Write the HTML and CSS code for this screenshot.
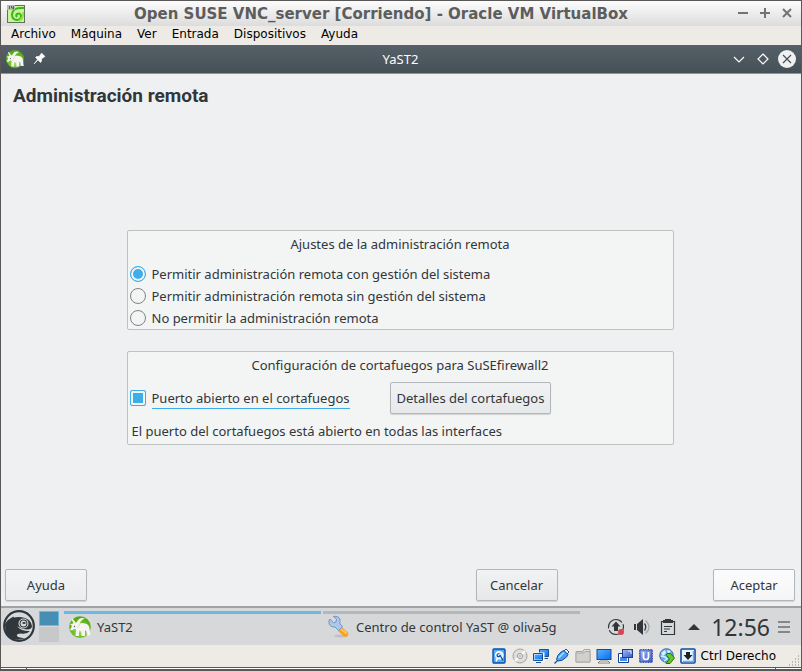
FILE: index.html
```html
<!DOCTYPE html>
<html lang="es">
<head>
<meta charset="utf-8">
<meta name="viewport" content="width=device-width, initial-scale=1">
<title>Open SUSE VNC_server [Corriendo] - Oracle VM VirtualBox</title>
<link rel="stylesheet" href="styles.css">
</head>
<body>
<svg class="defs" width="0" height="0" aria-hidden="true">
  <defs>
    <radialGradient id="leaf" cx="50%" cy="65%" r="60%"><stop offset="0" stop-color="#a3e04e"/><stop offset="1" stop-color="#4fa90e"/></radialGradient>
    <linearGradient id="screen" x1="0" y1="0" x2="1" y2="1"><stop offset="0" stop-color="#58b4ff"/><stop offset="1" stop-color="#0a6bea"/></linearGradient>
    <linearGradient id="chip" x1="0" y1="0" x2="1" y2="1"><stop offset="0" stop-color="#a3bcf5"/><stop offset="1" stop-color="#3758c8"/></linearGradient>
  </defs>
  <symbol id="yast" viewBox="0 0 24 24">
    <circle cx="12" cy="12" r="10.5" fill="url(#leaf)" stroke="#62b51d" stroke-width=".6"/>
    <path d="M2 9 L5.500 8.500 L3.500 4 L4.500 3.500 L8 8 L11 4 Q13 2.500 17 3.500 Q13.500 4.500 11.500 8.500 Q14 7.500 17 8.500 Q21 9 21.500 13.500 L22.500 20.500 H19 L18.500 16.500 L17 15.500 L17 21 H13.500 L13 16.500 L11 16 L11 21 H7.500 L8 14 Q5.500 13.500 4 15.500 L2 15 L4 11 Z" fill="#f6f6f1"/>
    <path d="M11 16 L13 16.500 L13.500 20.500 M17 15 L18.500 16.500 L19 20 M9 13 Q11 12 11.500 9" fill="none" stroke="#c7d3bd" stroke-width=".8"/>
    <circle cx="6.500" cy="11.500" r=".7" fill="#555"/>
  </symbol>
</svg>
<div class="vm">
  <header class="host-title">
    <svg class="vm-logo" viewBox="0 0 18 18" width="18" height="18" aria-hidden="true">
      <rect x=".5" y=".5" width="17" height="17" fill="#c8f49a" stroke="#637158"/>
      <path d="M17 3 Q5 2 5 10 Q5.500 15 10 15 Q14.500 14.500 14 10.500 Q13 7.500 10 9 Q8.500 10.500 10 12" fill="none" stroke="#3bb71a" stroke-width="2"/>
      <path d="M12 16 Q17 13 16 7" stroke="#8ee34b" fill="none" stroke-width="2"/>
      <rect x="0" y="0" width="8" height="5" fill="#b9b9b0"/>
      <path d="M2.500 1V4M4.500 1V3H6.500M6.500 1V4.500" stroke="#4c4c4c" fill="none" stroke-width=".8"/>
    </svg>
    <h1>Open SUSE VNC_server [Corriendo] - Oracle VM VirtualBox</h1>
    <div class="host-controls">
      <button type="button" aria-label="Minimizar"><svg viewBox="0 0 12 12" width="12" height="12"><path d="M1 5H11"/></svg></button>
      <button type="button" aria-label="Maximizar"><svg viewBox="0 0 12 12" width="12" height="12"><path d="M1 5H11M6 0V10"/></svg></button>
      <button type="button" aria-label="Cerrar"><svg viewBox="0 0 12 12" width="12" height="12"><path d="M2 1L10 9M10 1L2 9"/></svg></button>
    </div>
  </header>
  <nav class="host-menu">
    <button type="button">Archivo</button>
    <button type="button">Máquina</button>
    <button type="button">Ver</button>
    <button type="button">Entrada</button>
    <button type="button">Dispositivos</button>
    <button type="button">Ayuda</button>
  </nav>

  <div class="guest-title">
    <div class="guest-left">
      <svg width="20" height="20" aria-hidden="true"><use href="#yast"/></svg>
      <svg viewBox="0 0 14 14" width="14" height="14" aria-hidden="true"><path d="M8.500 1 L12 4.500 L11 5 L8.500 7 L8.500 9.500 L7.500 10.500 L5 8 L1 12 L4.500 7.500 L2.500 5.500 L3.500 4.500 L6 4.500 L8 2 Z" fill="#fcfcfc" stroke="#fcfcfc" stroke-width=".6"/></svg>
    </div>
    <span>YaST2</span>
    <div class="guest-controls">
      <button type="button" aria-label="Minimizar ventana"><svg viewBox="0 0 18 18" width="18" height="18"><path d="M4 7L9 12L14 7" fill="none" stroke="#fcfcfc" stroke-width="1.200"/></svg></button>
      <button type="button" aria-label="Maximizar ventana"><svg viewBox="0 0 18 18" width="18" height="18"><path d="M9 4L14 9L9 14L4 9Z" fill="none" stroke="#fcfcfc" stroke-width="1.200"/></svg></button>
      <button type="button" aria-label="Cerrar ventana"><svg viewBox="0 0 18 18" width="18" height="18"><circle cx="9" cy="9" r="9" fill="#eff0f1"/><path d="M5 5L13 13M13 5L5 13" stroke="#475057" stroke-width="1.200"/></svg></button>
    </div>
  </div>

  <main class="dialog">
    <h2 class="heading">Administración remota</h2>
    <div class="groups">
      <section class="group" role="radiogroup" aria-labelledby="remote-title">
        <h3 id="remote-title">Ajustes de la administración remota</h3>
        <div class="options">
          <label class="option"><input type="radio" name="remote" checked><span>Permitir administración remota con gestión del sistema</span></label>
          <label class="option"><input type="radio" name="remote"><span>Permitir administración remota sin gestión del sistema</span></label>
          <label class="option"><input type="radio" name="remote"><span>No permitir la administración remota</span></label>
        </div>
      </section>
      <section class="group" aria-labelledby="fw-title">
        <h3 id="fw-title">Configuración de cortafuegos para SuSEfirewall2</h3>
        <div class="firewall">
          <label class="option"><input type="checkbox" checked><span class="focused">Puerto abierto en el cortafuegos</span></label>
          <button type="button" class="btn details">Detalles del cortafuegos</button>
        </div>
        <p class="status-text">El puerto del cortafuegos está abierto en todas las interfaces</p>
      </section>
    </div>
    <div class="actions">
      <button type="button" class="btn help">Ayuda</button>
      <button type="button" class="btn cancel">Cancelar</button>
      <button type="button" class="btn accept">Aceptar</button>
    </div>
  </main>

  <footer class="panel">
    <button type="button" class="launcher" aria-label="Menú de aplicaciones">
      <svg viewBox="0 0 32 32" width="32" height="32">
        <circle cx="16" cy="16" r="14.800" fill="#d6d8da" stroke="#30373c" stroke-width="2.200"/>
        <path d="M2 15 Q3 10 9 7.500 L10 6.500 L11 7.500 Q17 6.500 22 8 Q28 10 29 16 Q29 19 25 19.500 Q20 19.500 14 16.500 Q19 21.500 27 21 Q24 24.500 18 23.500 Q13 23.500 14 26 Q16 28 22 28 Q16 31 10 29 Q2 25 2 15Z" fill="#30373c"/>
        <circle cx="20.500" cy="13.500" r="5" fill="#d6d8da"/><circle cx="20.500" cy="13.500" r="3.900" fill="#30373c"/><circle cx="20.500" cy="13.500" r="2.900" fill="#d6d8da"/><ellipse cx="21" cy="13" rx="1.700" ry="1" fill="#30373c"/>
      </svg>
    </button>
    <div class="pager"><span class="desk current"></span><span class="desk"></span></div>
    <div class="tasks">
      <button type="button" class="task active"><svg width="24" height="24" aria-hidden="true"><use href="#yast"/></svg><span>YaST2</span></button>
      <button type="button" class="task">
        <svg viewBox="0 0 24 24" width="24" height="24" aria-hidden="true">
          <ellipse cx="14" cy="21" rx="7" ry="1.500" fill="#bfc0c2"/>
          <path d="M14 15L18.500 19" stroke="#f7a321" stroke-width="5.500" stroke-linecap="round"/>
          <path d="M14 14L19 18" stroke="#ffc653" stroke-width="2" stroke-linecap="round"/>
          <path d="M2 8 Q1.500 5 3 4 L6.500 8 L9 7 L9.500 4 L6.500 1.500 Q11.500 .5 13 4.500 Q13.500 7 12.500 8 L15.500 12 L11.500 15.500 L8 12 Q3 12.500 2 8Z" fill="#aec8ea" stroke="#658fc8" stroke-width=".9"/>
        </svg><span>Centro de control YaST @ oliva5g</span></button>
    </div>
    <div class="tray">
      <svg viewBox="0 0 18 18" width="18" height="18" aria-hidden="true"><circle cx="9" cy="9" r="7.500" fill="none" stroke="#31363b" stroke-width="1.200" stroke-dasharray="20 2"/><path d="M9 3.500L13.500 8.500H11V13H7V8.500H4.500Z" fill="#31363b"/><circle cx="14" cy="14" r="3" fill="#da4453"/></svg>
      <svg viewBox="0 0 18 18" width="18" height="18" aria-hidden="true"><path d="M1 6H3V12H1ZM4 6L10 1V17L4 12Z" fill="#31363b"/><path d="M11.500 5.500Q14 9 11.500 12.500" fill="none" stroke="#31363b" stroke-width="1.300"/><path d="M12.500 2.500Q19.500 9 12.500 15.500" fill="none" stroke="#a5a7a9" stroke-width="1.300"/></svg>
      <svg viewBox="0 0 18 18" width="18" height="18" aria-hidden="true"><path d="M2.500 3.500H15.500V16.500H2.500Z" fill="none" stroke="#31363b" stroke-width="1.200"/><path d="M4 2H6V1H12V2H14V5H4Z" fill="#31363b"/><path d="M5 8.500H13M5 11H11M5 13.500H8" stroke="#31363b"/></svg>
      <svg viewBox="0 0 18 18" width="18" height="18" aria-hidden="true"><path d="M3 12L9 6L15 12Z" fill="#31363b"/></svg>
      <time>12:56</time>
      <svg viewBox="0 0 12 12" width="12" height="12" aria-hidden="true"><path d="M0 1H12M0 6H12M0 11H12" stroke="#85888b" stroke-width="2"/></svg>
    </div>
  </footer>

  <div class="statusbar">
    <svg viewBox="0 0 16 16" width="16" height="16" aria-hidden="true"><rect x="2" y="1" width="12" height="14" rx="1" fill="#55adfa" stroke="#0650a8" stroke-width="1.400"/><path d="M4.500 8.500Q4 4 8 3.500Q12.500 4 12 8Q10.500 12 7 10.500L5 13.500" fill="#ddecfb" stroke="#fff" stroke-width="1.200"/><path d="M8.500 5.500Q5 6 6.500 8.500Q9 9 9 7L12 12.500" fill="none" stroke="#0650a8" stroke-width="1.200"/></svg>
    <svg viewBox="0 0 16 16" width="16" height="16" aria-hidden="true"><circle cx="8" cy="8" r="7" fill="#dededc" stroke="#a3a3a0"/><path d="M8 8L13 3M8 8L3 13" stroke="#fff" stroke-width="2"/><circle cx="8" cy="8" r="2.500" fill="#eee" stroke="#999"/><circle cx="8" cy="8" r=".8" fill="#999"/></svg>
    <svg viewBox="0 0 16 16" width="16" height="16" aria-hidden="true"><path d="M6.500 1.500H15.500V8.500H6.500Z" fill="url(#screen)" stroke="#164c98"/><path d="M11 10.500H15" stroke="#164c98"/><rect x=".5" y="5.500" width="10" height="7" fill="url(#screen)" stroke="#fff" stroke-width="2"/><path d="M.5 5.500H9.500V12.500H.5ZM3 14.500H8" fill="none" stroke="#164c98"/></svg>
    <svg viewBox="0 0 16 16" width="16" height="16" aria-hidden="true"><path d="M10 3L12 1L15 4L13 6Z" fill="#f4f7fc" stroke="#1b529a"/><path d="M10 2.500L14 6.500L12.500 9Q8 13.500 4 13L2.500 11.500Q3 7 7 4Z" fill="#4c9ff4" stroke="#0d4f9f"/><path d="M4.500 10L10 4.500" stroke="#b7dcff" stroke-width="1.500"/><path d="M3.500 12.500L.5 15.500" stroke="#0d4f9f" stroke-width="1.300"/></svg>
    <svg viewBox="0 0 16 16" width="16" height="16" aria-hidden="true"><path d="M1 3.500H8L9 1.500H15V14H1Z" fill="#e0e0df" stroke="#a4a4a1"/><path d="M1 5H9L10 3.500H15V14H1Z" fill="#d0d0ce" stroke="#aaa"/></svg>
    <svg viewBox="0 0 16 16" width="16" height="16" aria-hidden="true"><rect x="1" y="1.500" width="14" height="10" fill="url(#screen)" stroke="#164c98"/><path d="M4 13H12L14 15H2Z" fill="#fff" stroke="#666" stroke-width=".8"/></svg>
    <svg viewBox="0 0 16 16" width="16" height="16" aria-hidden="true"><path d="M1.500 5.500H11.500V14.500H1.500Z" fill="#fff" stroke="#183f91"/><path d="M3 9H10V13H3Z" fill="#458bed"/><rect x="5.500" y="1.500" width="10" height="8" fill="url(#chip)" stroke="#183f91"/><path d="M11 3H14V6" stroke="#e7efff" fill="none"/></svg>
    <svg viewBox="0 0 16 16" width="16" height="16" aria-hidden="true"><path d="M1 3H15M1 5.500H15M1 8H15M1 10.500H15M1 13H15M3 1V15M5.500 1V15M8 1V15M10.500 1V15M13 1V15" stroke="#293a8c"/><rect x="2" y="2" width="12" height="12" fill="url(#chip)" stroke="#3e55b9"/><path d="M5.500 4V9Q5.500 11.500 8 11.500Q10.500 11.500 10.500 9V4" fill="none" stroke="#fff" stroke-width="1.700"/></svg>
    <svg viewBox="0 0 16 16" width="16" height="16" aria-hidden="true"><circle cx="7.500" cy="7.500" r="6.800" fill="#67a9ee" stroke="#426d9b"/><path d="M2 5L6 2L7 5L4 8ZM8 2L12 3L9 6Z" fill="#d8f0ff"/><path d="M8 5.500H11.500L15.500 10L11 15.500H7L10.500 11L7.500 7.500Z" fill="#65c82a" stroke="#247409"/><path d="M2 8L6 9L8 11L5 13" fill="none" stroke="#d8f0ff" stroke-width="1.500"/></svg>
    <svg viewBox="0 0 16 16" width="16" height="16" aria-hidden="true"><rect x="1" y="1" width="14" height="14" rx="1" fill="#e8f3ff" stroke="#0a4e9f" stroke-width="1.600"/><path d="M3 13.500H13.500V3" fill="none" stroke="#68aef5" stroke-width="1.500"/><path d="M6 4H10V7H12.500L8 12L3.500 7H6Z" fill="#1b2228"/></svg>
    <span>Ctrl Derecho</span>
    <svg class="grip" viewBox="0 0 12 12" width="12" height="12" aria-hidden="true"><path d="M10 1h1M7 4h1M10 4h1M4 7h1M7 7h1M10 7h1M1 10h1M4 10h1M7 10h1M10 10h1" stroke="#aaa7a2" stroke-width="1.500"/></svg>
  </div>
  <div class="frame-bottom"></div>
</div>
</body>
</html>
```
FILE: styles.css
```css
* { box-sizing: border-box; }

body {
  margin: 0;
  font: 13px/18px "Noto Sans", sans-serif;
  color: #31363b;
}

button {
  margin: 0;
  padding: 0;
  border: 0;
  background: none;
  color: inherit;
  font: inherit;
}

svg { display: block; flex: none; }
.defs { position: absolute; }
h1, h2, h3, p { margin: 0; }

.vm {
  display: flex;
  flex-direction: column;
  min-height: 100vh;
  border: solid #5a5757;
  border-width: 1px 1px 0;
  background: #eff0f1;
}

/* Host window */
.host-title {
  display: grid;
  grid-template-columns: 18px 1fr 56px;
  align-items: center;
  height: 25px;
  padding: 0 8px 0 6px;
  background: linear-gradient(#fcfcfc, #dcdcdc);
}

.host-title h1 {
  color: #5d5d5d;
  font: bold 15px/24px "DejaVu Sans", sans-serif;
  text-align: center;
  white-space: nowrap;
}

.host-controls {
  display: flex;
  justify-content: flex-end;
  gap: 10px;
}

.host-controls path { stroke: #737373; stroke-width: 2; }

.host-menu {
  display: flex;
  align-items: flex-start;
  gap: 15px;
  height: 19px;
  padding-left: 10px;
  background: #eeebe7;
  color: #000;
  font: 12px/16px "DejaVu Sans", sans-serif;
}

/* Guest window */
.guest-title {
  display: grid;
  grid-template-columns: 1fr auto 1fr;
  align-items: center;
  height: 29px;
  padding: 0 5px 0 4px;
  border-bottom: 1px solid #3daee9;
  background: linear-gradient(#566068, #465057);
  color: #fcfcfc;
}

.guest-left { display: flex; align-items: center; gap: 8px; }
.guest-controls { display: flex; justify-content: flex-end; gap: 6px; }

.dialog {
  flex: 1;
  display: flex;
  flex-direction: column;
  padding: 10px 6px 5px 4px;
  background: #eff0f2;
}

.heading {
  padding-left: 8px;
  font: bold 19px/24px Roboto, sans-serif;
}

.groups {
  flex: 1;
  display: flex;
  flex-direction: column;
  justify-content: center;
  gap: 21px;
  width: 100%;
  max-width: 547px;
  margin: 0 auto;
  padding-bottom: 2px;
}

.group {
  border: 1px solid #bdc1bf;
  border-radius: 2px;
  background: #f3f5f4;
}

.group h3 {
  font-size: 13px;
  font-weight: normal;
  line-height: 26px;
  text-align: center;
}

.options { padding: 6px 2px 0; }

.option {
  display: flex;
  align-items: center;
  gap: 6px;
  height: 22px;
}

.option input {
  appearance: none;
  flex: none;
  width: 16px;
  height: 16px;
  margin: 0;
  border: 1px solid #7f8386;
  background: #f3f5f4;
}

.option input[type="radio"] { border-radius: 50%; }
.option input[type="checkbox"] { border-radius: 2px; }

.option input:checked {
  border-color: #3daee9;
  background: #3daee9;
  box-shadow: inset 0 0 0 2px #f3f5f4;
}

.focused { border-bottom: 1px solid #3daee9; line-height: 20px; }

.firewall {
  display: flex;
  align-items: center;
  gap: 40px;
  padding: 4px 2px 0;
}

.status-text { padding: 8px 4px 4px; }

.btn {
  height: 32px;
  padding: 0 6px;
  border: 1px solid #b4b7b9;
  border-radius: 2px;
  background: linear-gradient(#f1f2f3, #e7e8ea);
  box-shadow: 0 1px 1px #d0d2d4;
}

.actions {
  display: grid;
  grid-template-columns: 82px 5fr 82px 2fr 82px;
}

.help { background: linear-gradient(#f3f4f5, #ebecee); }
.cancel { grid-column: 3; }
.accept { grid-column: 5; background: linear-gradient(#fcfcfc, #f5f5f6); }

/* Desktop panel */
.panel {
  display: flex;
  height: 39px;
  border-top: 2px solid #a0a2a3;
  background: #d6d8da;
}

.launcher { padding: 2px 0 3px 2px; }

.pager {
  display: flex;
  flex-direction: column;
  gap: 1px;
  width: 20px;
  margin: 3px 5px 0 4px;
}

.desk { height: 15px; background: #c6c8ca; }
.desk.current { border: 1px solid #67b9e6; background: #478eb5; }

.tasks { display: flex; flex: 1; gap: 2px; min-width: 0; padding: 3px 0 5px; }

.task {
  display: flex;
  flex: 1;
  align-items: center;
  gap: 5px;
  max-width: 257px;
  padding-left: 4px;
  border-top: 3px solid #b5b7b9;
  white-space: nowrap;
}

.task.active { border-color: #67b9e6; }

.tray {
  display: flex;
  flex: none;
  align-items: center;
  gap: 8px;
  padding-right: 11px;
}

.tray time { font-size: 23px; line-height: 32px; }

/* Virtual machine status bar */
.statusbar {
  display: flex;
  align-items: center;
  justify-content: flex-end;
  gap: 5px;
  height: 22px;
  padding-right: 1px;
  background: #eeebe7;
  color: #000;
  font: 12px/18px "DejaVu Sans", sans-serif;
}

.grip { align-self: flex-end; margin-left: 7px; }

.frame-bottom {
  height: 4px;
  border: solid #5a5757;
  border-width: 1px 0 2px;
  background: linear-gradient(90deg, #fff 25px, #5a5757 25px 26px, #fff 26px calc(100% - 26px), #5a5757 calc(100% - 26px) calc(100% - 25px), #fff calc(100% - 25px));
}
```
